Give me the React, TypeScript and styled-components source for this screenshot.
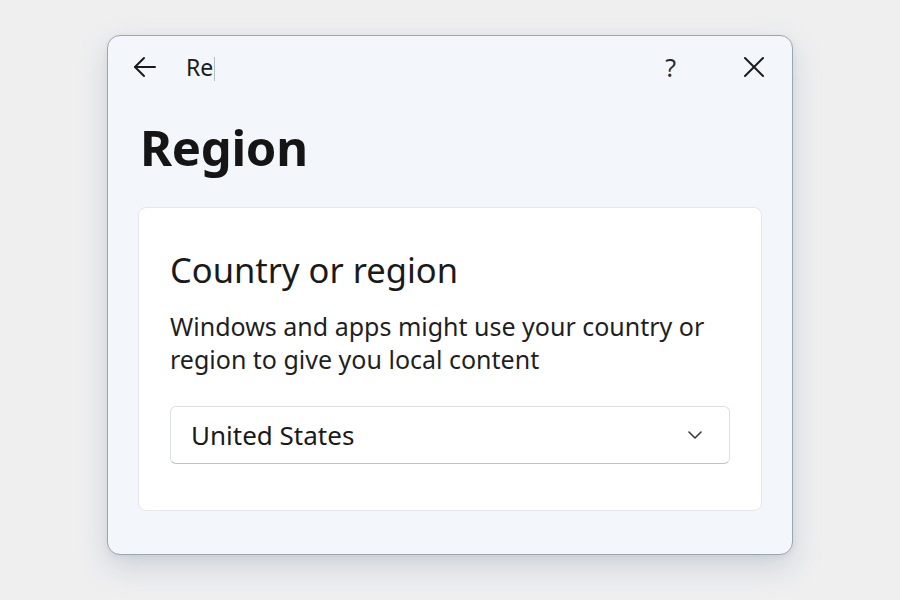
import styled, { createGlobalStyle } from "styled-components"

const GlobalStyle = createGlobalStyle`
  html, body {
    margin: 0;
    padding: 0;
    background: #efeff0;
    font-family: "Noto Sans", "Open Sans", sans-serif;
    color: #1a1a1a;
  }
`

const Page = styled.div`
  width: 900px;
  height: 600px;
  box-sizing: border-box;
  padding: 35px 0 0 107px;
`

const Window = styled.div`
  width: 686px;
  height: 520px;
  box-sizing: border-box;
  background: #f3f7fb;
  border: 1.5px solid #9ba6b2;
  border-radius: 13px;
  box-shadow: 0 12px 28px rgba(120, 140, 160, 0.28), 0 2px 6px rgba(0, 0, 0, 0.06);
  display: flex;
  flex-direction: column;
  padding: 0 24px 0 30px;
`

const TitleBar = styled.div`
  height: 62px;
  display: flex;
  align-items: center;
  margin-left: -7px;
`

const IconButton = styled.button`
  border: none;
  background: none;
  padding: 0;
  width: 28px;
  height: 28px;
  display: flex;
  align-items: center;
  justify-content: center;
  color: #1b1b1b;
  cursor: pointer;
`

const TitleText = styled.div`
  margin-left: 27px;
  font-size: 23px;
  display: flex;
  align-items: center;
  color: #1b1b1b;
`

const Caret = styled.span`
  display: inline-block;
  width: 1px;
  height: 24px;
  margin-left: 1px;
  margin-top: 4px;
  background: #b9bec4;
`

const Spacer = styled.div`
  flex: 1;
`

const Help = styled.span`
  font-size: 25px;
  color: #2a2a2a;
  margin-right: 64px;
`

const Heading = styled.h1`
  margin: 16px 0 0 2px;
  font-size: 49px;
  font-weight: 700;
  line-height: 66px;
  color: #151515;
  letter-spacing: -0.3px;
`

const Card = styled.div`
  margin: 27px 6px 0 0;
  height: 304px;
  box-sizing: border-box;
  background: #ffffff;
  border: 1px solid #e3e7eb;
  border-radius: 8px;
  padding: 38px 31px 0 31px;
`

const CardTitle = styled.h2`
  margin: 0;
  font-size: 34.5px;
  font-weight: 400;
  line-height: 48px;
  color: #1a1a1a;
`

const Description = styled.p`
  margin: 16px 0 0 0;
  font-size: 25px;
  line-height: 33px;
  color: #1f1f1f;
`

const Select = styled.div`
  margin-top: 30px;
  height: 58px;
  box-sizing: border-box;
  border: 1px solid #dcdfe3;
  border-bottom-color: #bfc3c8;
  border-radius: 6px;
  background: #ffffff;
  display: flex;
  align-items: center;
  padding: 0 26px 0 20px;
  font-size: 26px;
  color: #1a1a1a;
`

const SelectValue = styled.span`
  flex: 1;
`

export default function App() {
  return (
    <>
      <GlobalStyle />
      <Page>
        <Window>
          <TitleBar>
            <IconButton aria-label="Back">
              <svg width="26" height="26" viewBox="0 0 26 26" fill="none" stroke="#1b1b1b" strokeWidth="2" strokeLinecap="round" strokeLinejoin="round">
                <path d="M23 13H3" />
                <path d="M12 4L3 13l9 9" />
              </svg>
            </IconButton>
            <TitleText>
              Re
              <Caret />
            </TitleText>
            <Spacer />
            <Help>?</Help>
            <IconButton aria-label="Close">
              <svg width="24" height="24" viewBox="0 0 24 24" fill="none" stroke="#1b1b1b" strokeWidth="2" strokeLinecap="round">
                <path d="M3 3l18 18" />
                <path d="M21 3L3 21" />
              </svg>
            </IconButton>
          </TitleBar>
          <Heading>Region</Heading>
          <Card>
            <CardTitle>Country or region</CardTitle>
            <Description>
              Windows and apps might use your country or
              <br />
              region to give you local content
            </Description>
            <Select>
              <SelectValue>United States</SelectValue>
              <svg width="16" height="10" viewBox="0 0 16 10" fill="none" stroke="#3a3a3a" strokeWidth="1.6" strokeLinecap="round" strokeLinejoin="round">
                <path d="M2 2l6 6 6-6" />
              </svg>
            </Select>
          </Card>
        </Window>
      </Page>
    </>
  )
}
